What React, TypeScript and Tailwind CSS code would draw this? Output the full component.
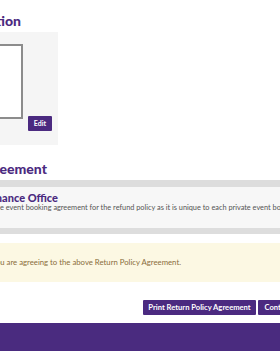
export default function App() {
  return (
    <div className="w-[280px] h-[351px] overflow-hidden bg-white font-['Lato',sans-serif] flex flex-col">
      {/* section heading, cut at the left edge */}
      <div className="flex justify-end w-[21px] mt-[13px] h-[16px]">
        <h2 className="whitespace-nowrap text-[14px] font-black leading-[16px] text-[#4b2a80]">Signature Confirmation</h2>
      </div>

      {/* signature panel */}
      <div className="-ml-[150px] w-[208px] mt-[3px] bg-[#f5f5f5] flex justify-end items-start gap-[5px] pt-[12px] pb-[14px] pr-[6px]">
        <div className="w-[150px] h-[75px] border-2 border-[#8c8c8c] bg-white" />
        <button className="mt-[72px] h-[15px] w-[24px] flex items-center justify-center bg-[#4b2a80] text-white text-[7px] font-bold rounded-[1px]">
          Edit
        </button>
      </div>

      <div className="flex justify-end w-[47px] mt-[16px] h-[16px]">
        <h2 className="whitespace-nowrap text-[14px] font-black leading-[16px] text-[#4b2a80]">Return Policy Agreement</h2>
      </div>

      {/* agreement panel */}
      <div className="mt-[3px] h-[54px] border-t-[7px] border-b-[6px] border-[#dddddd] bg-[#f7f7f7] flex flex-col">
        <div className="flex justify-end w-[58px] mt-[5px] h-[11px]">
          <h3 className="whitespace-nowrap text-[11px] font-black leading-[11px] text-[#4b2a80]">Contact the Finance Office</h3>
        </div>
        <p className="-ml-[83px] mt-[1px] whitespace-nowrap text-[7.35px] leading-[8px] text-[#555555]">
          Please refer to your private event booking agreement for the refund policy as it is unique to each private event booking.
        </p>
      </div>

      {/* notice */}
      <div className="mt-[9px] h-[39px] bg-[#fcf8e3] flex items-center">
        <div className="flex justify-end w-[181px]">
          <p className="whitespace-nowrap text-[7.75px] leading-[9px] text-[#8a6d3b]">
            By clicking Continue, you are agreeing to the above Return Policy Agreement.
          </p>
        </div>
      </div>

      {/* actions */}
      <div className="mt-[18px] pl-[143px] flex gap-[2px]">
        <button className="h-[15px] w-[113px] shrink-0 flex items-center justify-center bg-[#4b2a80] text-white text-[7.6px] font-bold rounded-[1px] whitespace-nowrap">
          Print Return Policy Agreement
        </button>
        <button className="h-[15px] w-[44px] shrink-0 flex items-center justify-center bg-[#4b2a80] text-white text-[7.6px] font-bold rounded-[1px] whitespace-nowrap">
          Continue
        </button>
      </div>

      {/* footer */}
      <div className="mt-[8px] flex-1 bg-[#4a2b7f]" />
    </div>
  );
}
